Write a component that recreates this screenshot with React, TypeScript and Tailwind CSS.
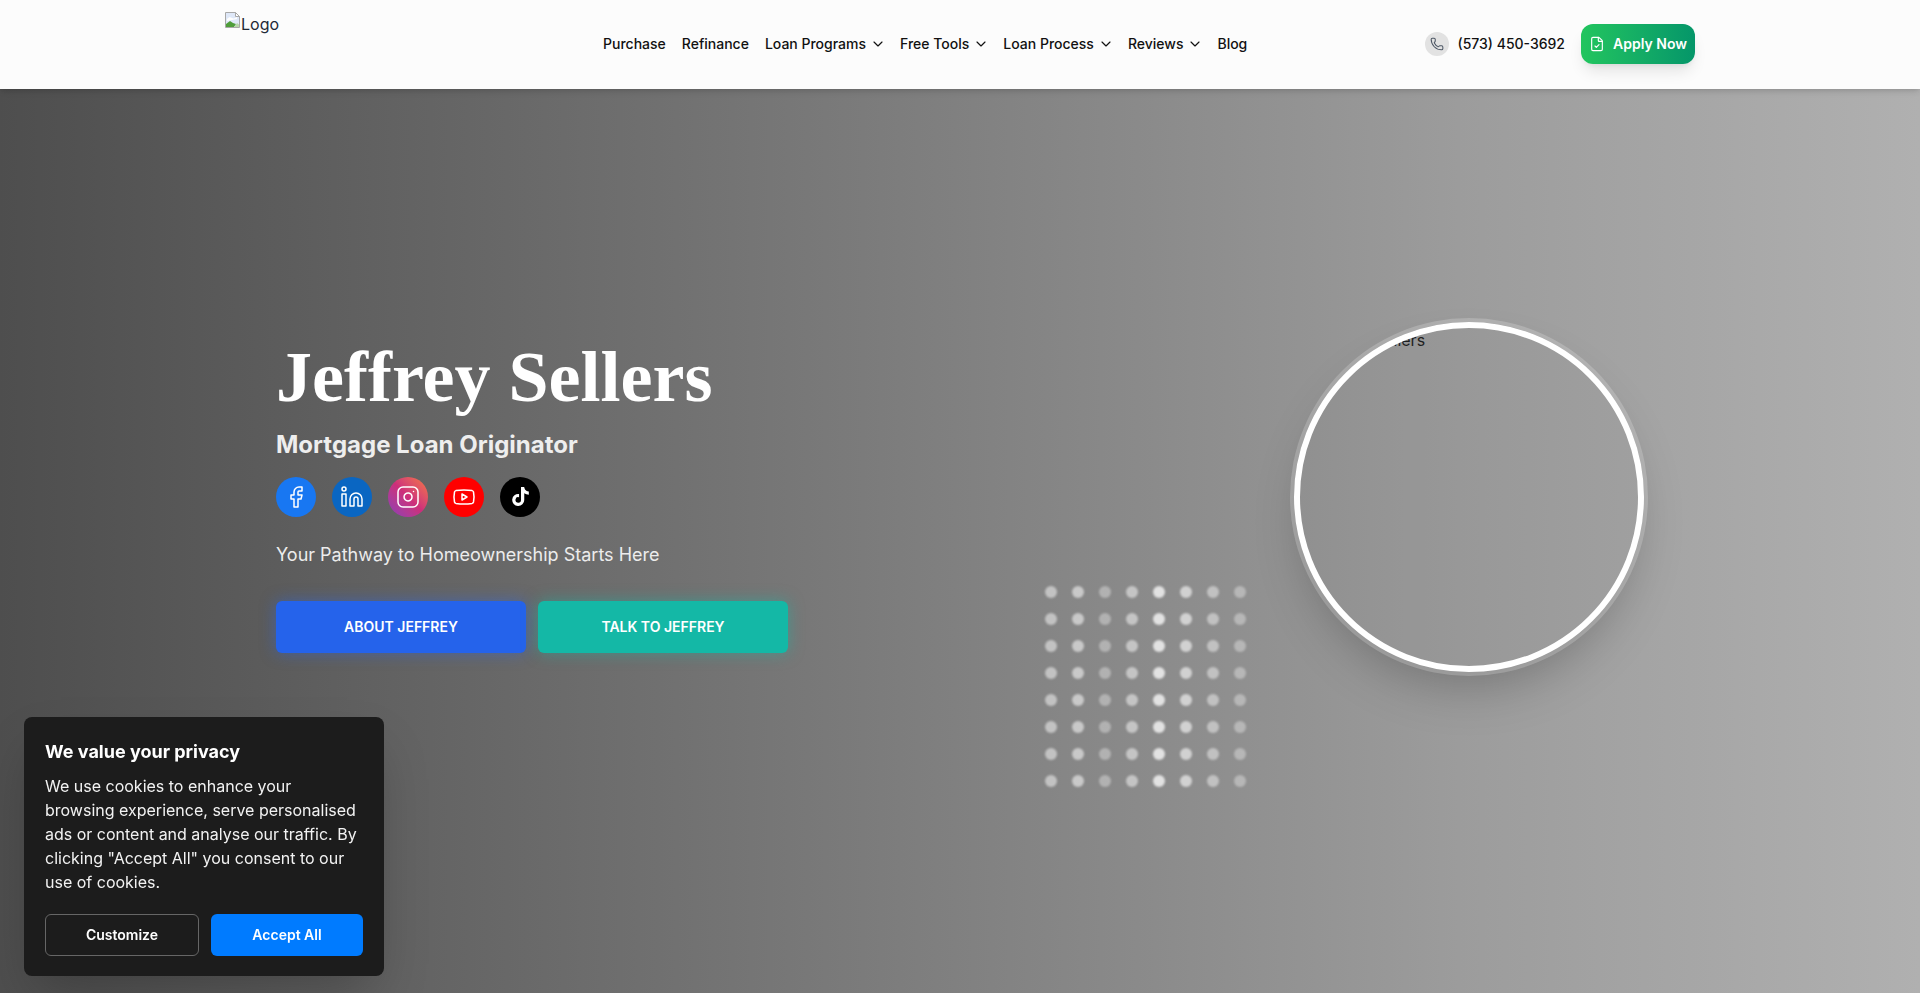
import { ChevronDown, Facebook, FileCheck, Instagram, Linkedin, Phone, Youtube } from "lucide-react";
import { FaTiktok } from "react-icons/fa";

const navItems = [
  { label: "Purchase" },
  { label: "Refinance" },
  { label: "Loan Programs", menu: true },
  { label: "Free Tools", menu: true },
  { label: "Loan Process", menu: true },
  { label: "Reviews", menu: true },
  { label: "Blog" },
];

const dotColumns = ["opacity-50", "opacity-55", "opacity-35", "opacity-50", "opacity-75", "opacity-60", "opacity-45", "opacity-35"];

function BrokenImage() {
  return (
    <svg className="w-4 h-4 shrink-0" viewBox="0 0 16 16">
      <path d="M0.500 0.500h10l4 4v11h-14z" fill="#dfe8f8" stroke="#a8a8a8" />
      <path d="M10.500 0.500v4h4z" fill="#fff" stroke="#a8a8a8" />
      <path d="M2 7c2-2 3-2 5-1s3 0 5-1v2L2 9z" fill="#fff" />
      <path d="M1 15v-3l4-3 3 2 3 1-2 3z" fill="#4f9d3a" />
      <path d="M9 15l3-4 2 1.500V15z" fill="#b7d6a8" />
    </svg>
  );
}

function Header() {
  return (
    <header className="relative z-10 h-[89px] shrink-0 bg-[#fcfcfc] shadow-md">
      <div className="w-[1470px] mx-auto h-[88px] flex">
        <div className="w-[378px] pt-3 flex items-start text-base leading-6 text-[#1f2937]">
          <BrokenImage />
          <span>Logo</span>
        </div>
        <nav className="flex items-center gap-4 text-sm font-medium text-[#111111] h-full">
          {navItems.map((item) => (
            <a key={item.label} className="flex items-center gap-0.5">
              {item.label}
              {item.menu && <ChevronDown className="w-4 h-4 ml-0.5 -mr-0.5" strokeWidth={1.75} />}
            </a>
          ))}
        </nav>
        <div className="ml-auto flex items-center">
          <div className="flex items-center gap-2 text-sm font-medium text-[#111111]">
            <span className="w-6 h-6 rounded-full bg-[#e2e2e2] flex items-center justify-center">
              <Phone className="w-3.5 h-3.5 text-[#4b5563]" strokeWidth={1.75} />
            </span>
            (573) 450-3692
          </div>
          <a className="ml-4 w-[114px] h-10 rounded-xl bg-gradient-to-r from-[#22c55e] to-[#059669] text-white text-sm font-semibold flex items-center justify-center gap-2 shadow-lg">
            <FileCheck className="w-4 h-4" strokeWidth={1.75} />
            Apply Now
          </a>
        </div>
      </div>
    </header>
  );
}

function SocialLinks() {
  return (
    <div className="flex gap-4 mt-4">
      <a className="w-10 h-10 rounded-full bg-[#1877f2] flex items-center justify-center text-white">
        <Facebook className="w-6 h-6" strokeWidth={1.5} />
      </a>
      <a className="w-10 h-10 rounded-full bg-[#0a66c2] flex items-center justify-center text-white">
        <Linkedin className="w-6 h-6" strokeWidth={1.5} />
      </a>
      <a className="w-10 h-10 rounded-full bg-gradient-to-tr from-[#8a3ab9] via-[#cd2e7a] to-[#f77737] flex items-center justify-center text-white">
        <Instagram className="w-6 h-6" strokeWidth={1.5} />
      </a>
      <a className="w-10 h-10 rounded-full bg-[#ff0000] flex items-center justify-center text-white">
        <Youtube className="w-6 h-6" strokeWidth={1.5} />
      </a>
      <a className="w-10 h-10 rounded-full bg-black flex items-center justify-center text-white">
        <FaTiktok className="w-[19px] h-[19px]" />
      </a>
    </div>
  );
}

function DotGrid() {
  return (
    <div className="absolute left-[-249px] top-[264px] grid grid-cols-8 gap-x-[15px] gap-y-[15px]">
      {Array.from({ length: 8 }).map((_, row) =>
        dotColumns.map((opacity, col) => (
          <span key={`${row}-${col}`} className={`w-3 h-3 rounded-full bg-white blur-[1px] ${opacity}`} />
        ))
      )}
    </div>
  );
}

function Hero() {
  return (
    <section className="flex-1 bg-gradient-to-r from-[#4e4e4e] via-[#9c9c9c] via-[76%] to-[#b0b0b0] pb-[88px] flex items-center">
      <div className="w-[1470px] mx-auto px-[51px] flex items-center justify-between">
        <div className="w-[600px] pb-px">
          <h1 className="font-['Liberation_Serif',serif] font-bold text-[72px] leading-[72px] text-white">Jeffrey Sellers</h1>
          <h2 className="mt-4 text-2xl font-bold text-[#eeeeee]">Mortgage Loan Originator</h2>
          <SocialLinks />
          <p className="mt-6 text-lg text-[#ececec]">Your Pathway to Homeownership Starts Here</p>
          <div className="flex gap-3 mt-8">
            <a className="w-[250px] h-[52px] rounded-md bg-[#2563eb] text-white text-sm font-semibold flex items-center justify-center shadow-[0_0_15px_rgba(37,99,235,0.5)]">ABOUT JEFFREY</a>
            <a className="w-[250px] h-[52px] rounded-md bg-[#14b8a6] text-white text-sm font-semibold flex items-center justify-center shadow-[0_0_15px_rgba(20,184,166,0.5)]">TALK TO JEFFREY</a>
          </div>
        </div>
        <div className="relative">
          <DotGrid />
          <div className="w-[350px] h-[350px] rounded-full border-[6px] border-white overflow-hidden bg-black/[0.02] shadow-[0_0_0_4px_rgba(255,255,255,0.2),0_25px_50px_-12px_rgba(0,0,0,0.25)] pl-[16px] text-base leading-6 text-[#1f1f1f]">
            Jeffrey Sellers
          </div>
        </div>
      </div>
    </section>
  );
}

function CookieBanner() {
  return (
    <div className="fixed left-6 bottom-[17px] w-[360px] rounded-lg bg-[#1c1c1c] px-[21px] pt-[21px] pb-5 text-white shadow-2xl">
      <h3 className="text-lg font-bold leading-7">We value your privacy</h3>
      <p className="mt-2 text-base leading-6 text-[#f2f2f2]">
        We use cookies to enhance your browsing experience, serve personalised ads or content and analyse our traffic. By clicking "Accept All" you consent to our use of cookies.
      </p>
      <div className="flex gap-3 mt-5">
        <button className="flex-1 h-[42px] rounded-md border border-[#666666] text-sm font-semibold">Customize</button>
        <button className="flex-1 h-[42px] rounded-md bg-[#007bff] text-sm font-semibold">Accept All</button>
      </div>
    </div>
  );
}

export default function App() {
  return (
    <div className="h-screen overflow-hidden flex flex-col font-['Inter',sans-serif]">
      <Header />
      <Hero />
      <CookieBanner />
    </div>
  );
}
